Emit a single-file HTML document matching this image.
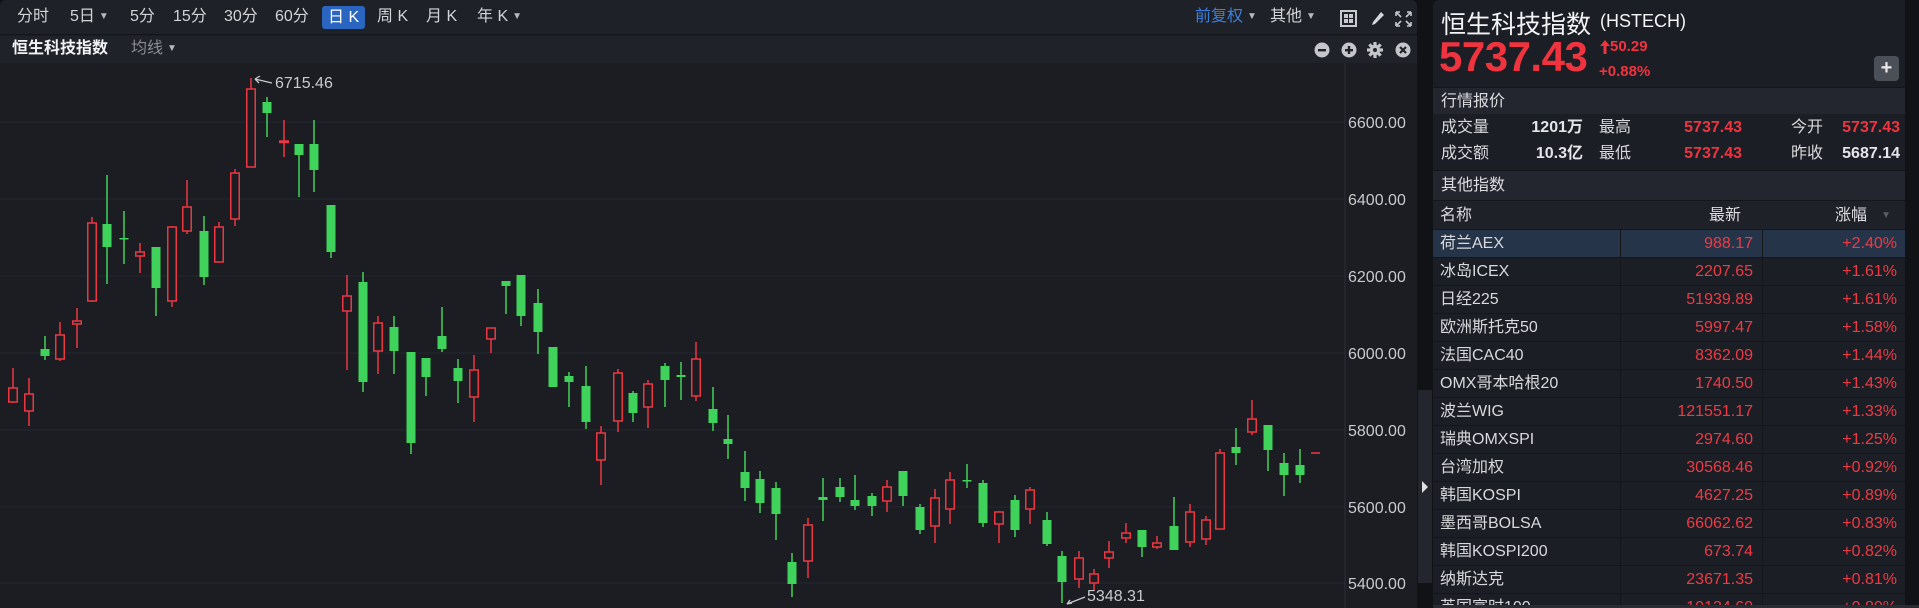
<!DOCTYPE html>
<html><head><meta charset="utf-8">
<style>
*{margin:0;padding:0;box-sizing:border-box}
body{width:1919px;height:608px;background:#111216;overflow:hidden;font-family:"Liberation Sans","Noto Sans CJK SC",sans-serif;color:#d8d9dc;position:relative}
.left{position:absolute;left:0;top:0;width:1417px;height:608px;background:#1b1d23;border-radius:6px 6px 0 0;overflow:hidden}
.tb{position:absolute;left:0;top:0;width:1417px;height:35px;background:#1f2128;border-bottom:1px solid #15161a}
.tb span{position:absolute;top:7px;font-size:16px;color:#d3d4d8;line-height:20px}
.tb .act{background:#2a66c0;color:#fff;border-radius:3px;padding:0 6px;top:6px;height:23px;line-height:23px}
.sb{position:absolute;left:0;top:36px;width:1417px;height:27px;background:#20222a}
.sb span{position:absolute;top:2px;font-size:16px;line-height:22px}
.chev{font-size:10px;color:#b8b9bd;vertical-align:2px;margin-left:4px}
.div{position:absolute;left:1417px;top:0;width:16px;height:608px;background:#111216}
.divt{position:absolute;left:1418px;top:390px;width:14px;height:193px;background:#24262d}
.right{position:absolute;left:1433px;top:0;width:486px;height:608px;background:#1c1e25;border-radius:6px 0 0 0;overflow:hidden}
.abs{position:absolute;white-space:nowrap}
.red{color:#f0343f}
.sec{position:absolute;left:0;width:472px;background:#23262e;font-size:16px;color:#dcdde0;padding-left:8px}
.row{position:absolute;left:0;width:472px;height:28px;border-bottom:1px solid #15161a;font-size:16px;line-height:28px}
.row .n{position:absolute;left:7px;color:#d8d9dc}
.row .v{position:absolute;right:152px;color:#ef3a44}
.row .p{position:absolute;right:8px;color:#ef3a44}
.row .s1{position:absolute;left:187px;top:0;width:1px;height:28px;background:#15161a}
.row .s2{position:absolute;left:329px;top:0;width:1px;height:28px;background:#15161a}
</style></head><body>
<div class="left">
  <div class="tb">
    <span style="left:17px">分时</span>
    <span style="left:70px">5日<i class="chev">▼</i></span>
    <span style="left:130px">5分</span>
    <span style="left:173px">15分</span>
    <span style="left:224px">30分</span>
    <span style="left:275px">60分</span>
    <span class="act" style="left:322px">日 K</span>
    <span style="left:377px">周 K</span>
    <span style="left:426px">月 K</span>
    <span style="left:477px">年 K<i class="chev">▼</i></span>
    <span style="left:1195px;color:#3d7fd9">前复权<i class="chev">▼</i></span>
    <span style="left:1270px">其他<i class="chev">▼</i></span>
    <svg style="position:absolute;left:1340px;top:10px" width="80" height="18" viewBox="0 0 80 18">
      <rect x="1" y="1" width="15" height="15" fill="none" stroke="#c9cacd" stroke-width="2"/>
      <rect x="4" y="4" width="4" height="4" fill="#c9cacd"/><rect x="9" y="4" width="4" height="4" fill="#c9cacd"/>
      <rect x="4" y="9" width="4" height="4" fill="#c9cacd"/><rect x="9" y="9" width="4" height="4" fill="#c9cacd"/>
      <path d="M41 2 L44 5 L35 14 L32 15 L33 12 Z" fill="#d6d7da"/>
      <path d="M56 2h4M56 2v4M71 2h-4M71 2v4M56 16h4M56 16v-4M71 16h-4M71 16v-4M57 3l4 4M70 3l-4 4M57 15l4-4M70 15l-4-4" stroke="#c9cacd" stroke-width="1.6" fill="none"/>
    </svg>
  </div>
  <div class="sb">
    <span style="left:12px;font-weight:bold;color:#f2f2f4">恒生科技指数</span>
    <span style="left:131px;color:#8b8d93">均线<i class="chev">▼</i></span>
    <svg style="position:absolute;left:1314px;top:6px" width="100" height="17" viewBox="0 0 100 17">
      <circle cx="8" cy="8" r="7.5" fill="#c5c6ca"/><rect x="4" y="7" width="8" height="2.4" fill="#20222a"/>
      <circle cx="35" cy="8" r="7.5" fill="#c5c6ca"/><rect x="31" y="7" width="8" height="2.4" fill="#20222a"/><rect x="33.8" y="4" width="2.4" height="8" fill="#20222a"/>
      <g transform="translate(61,8)" fill="#c5c6ca"><circle r="5.2"/><rect x="-1.6" y="-8" width="3.2" height="16"/><rect x="-8" y="-1.6" width="16" height="3.2"/><rect x="-1.6" y="-8" width="3.2" height="16" transform="rotate(45)"/><rect x="-1.6" y="-8" width="3.2" height="16" transform="rotate(-45)"/><circle r="2" fill="#20222a"/></g>
      <circle cx="89" cy="8" r="7.5" fill="#c5c6ca"/><path d="M86 5l6 6M92 5l-6 6" stroke="#20222a" stroke-width="2.2"/>
    </svg>
  </div>
  <svg style="position:absolute;left:0;top:63px" width="1417" height="545" viewBox="0 63 1417 545" font-family="Liberation Sans, sans-serif">
    <g stroke="#262830" stroke-width="1">
      <line x1="0" y1="122" x2="1345" y2="122"/><line x1="0" y1="199" x2="1345" y2="199"/>
      <line x1="0" y1="276" x2="1345" y2="276"/><line x1="0" y1="353" x2="1345" y2="353"/>
      <line x1="0" y1="430" x2="1345" y2="430"/><line x1="0" y1="507" x2="1345" y2="507"/>
      <line x1="0" y1="583" x2="1345" y2="583"/>
    </g>
    <line x1="1345" y1="63" x2="1345" y2="608" stroke="#2e3038"/>
    <g fill="#c9cacd" font-size="16">
      <text x="1348" y="128">6600.00</text><text x="1348" y="205">6400.00</text>
      <text x="1348" y="282">6200.00</text><text x="1348" y="359">6000.00</text>
      <text x="1348" y="436">5800.00</text><text x="1348" y="513">5600.00</text>
      <text x="1348" y="589">5400.00</text>
    </g>
    <g id="c"></g>
    <g fill="#c9cacd" font-size="16">
      <text x="275" y="88">6715.46</text>
      <text x="1087" y="601">5348.31</text>
    </g>
    <path d="M255 79 L272 83 M255 79 l5 -3 M255 79 l4 4" stroke="#c9cacd" stroke-width="1.3" fill="none"/>
    <path d="M1067 604 L1085 597 M1067 604 l5 -1 M1067 604 l3 -4" stroke="#c9cacd" stroke-width="1.3" fill="none"/>
    <line x1="1311" y1="453" x2="1320" y2="453" stroke="#ef3a44" stroke-width="1.5"/>
  </svg>
</div>
<div class="div"></div>
<div class="divt"></div>
<svg style="position:absolute;left:1421px;top:480px" width="8" height="14"><path d="M1 1 L7 7 L1 13 Z" fill="#e0e0e0"/></svg>
<div class="right">
  <div class="abs" style="left:8px;top:5px;font-size:25px;color:#f4f4f6">恒生科技指数</div>
  <div class="abs" style="left:167px;top:11px;font-size:18px;color:#f4f4f6">(HSTECH)</div>
  <div class="abs red" style="left:6px;top:33px;font-size:42px;font-weight:bold;letter-spacing:-0.5px">5737.43</div>
  <svg style="position:absolute;left:167px;top:40px" width="10" height="14"><path d="M5 0 L10 6 H6.5 V14 H3.5 V6 H0 Z" fill="#f0343f"/></svg>
  <div class="abs red" style="left:177px;top:38px;font-size:15px;font-weight:bold">50.29</div>
  <div class="abs red" style="left:166px;top:63px;font-size:15px;font-weight:bold">+0.88%</div>
  <div class="abs" style="left:441px;top:56px;width:25px;height:25px;background:#4b4f58;border-radius:4px;color:#e8e8ea;font-size:20px;line-height:24px;text-align:center;font-weight:bold">+</div>
  <div class="sec" style="top:87px;height:27px;line-height:27px;border-top:1px solid #15161a">行情报价</div>
  <div class="abs" style="left:0;top:114px;width:472px;height:56px;background:#1c1e25;font-size:16px;line-height:26px">
    <span class="abs" style="left:8px;top:1px">成交量</span>
    <span class="abs" style="right:322px;top:1px;font-weight:bold;color:#e4e5e8">1201万</span>
    <span class="abs" style="left:166px;top:1px">最高</span>
    <span class="abs red" style="right:163px;top:1px;font-weight:bold">5737.43</span>
    <span class="abs" style="left:358px;top:1px">今开</span>
    <span class="abs red" style="right:5px;top:1px;font-weight:bold">5737.43</span>
    <span class="abs" style="left:8px;top:27px">成交额</span>
    <span class="abs" style="right:322px;top:27px;font-weight:bold;color:#e4e5e8">10.3亿</span>
    <span class="abs" style="left:166px;top:27px">最低</span>
    <span class="abs red" style="right:163px;top:27px;font-weight:bold">5737.43</span>
    <span class="abs" style="left:358px;top:27px">昨收</span>
    <span class="abs" style="right:5px;top:27px;font-weight:bold;color:#e4e5e8">5687.14</span>
  </div>
  <div class="sec" style="top:170px;height:31px;line-height:30px;border-top:1px solid #15161a;border-bottom:1px solid #15161a">其他指数</div>
  <div class="row" style="top:201px;height:29px;line-height:29px;background:#1f2129">
    <span class="n">名称</span><span class="v" style="color:#dcdde0;right:164px">最新</span><span class="p" style="color:#dcdde0;right:38px">涨幅</span><span class="abs" style="right:14px;color:#5a5c62;font-size:10px">▼</span>
  </div>
  <div class="row" style="top:230px;background:#253449"><span class="n">荷兰AEX</span><span class="v">988.17</span><span class="p">+2.40%</span><i class="s1"></i><i class="s2"></i></div>
  <div class="row" style="top:258px"><span class="n">冰岛ICEX</span><span class="v">2207.65</span><span class="p">+1.61%</span><i class="s1"></i><i class="s2"></i></div>
  <div class="row" style="top:286px"><span class="n">日经225</span><span class="v">51939.89</span><span class="p">+1.61%</span><i class="s1"></i><i class="s2"></i></div>
  <div class="row" style="top:314px"><span class="n">欧洲斯托克50</span><span class="v">5997.47</span><span class="p">+1.58%</span><i class="s1"></i><i class="s2"></i></div>
  <div class="row" style="top:342px"><span class="n">法国CAC40</span><span class="v">8362.09</span><span class="p">+1.44%</span><i class="s1"></i><i class="s2"></i></div>
  <div class="row" style="top:370px"><span class="n">OMX哥本哈根20</span><span class="v">1740.50</span><span class="p">+1.43%</span><i class="s1"></i><i class="s2"></i></div>
  <div class="row" style="top:398px"><span class="n">波兰WIG</span><span class="v">121551.17</span><span class="p">+1.33%</span><i class="s1"></i><i class="s2"></i></div>
  <div class="row" style="top:426px"><span class="n">瑞典OMXSPI</span><span class="v">2974.60</span><span class="p">+1.25%</span><i class="s1"></i><i class="s2"></i></div>
  <div class="row" style="top:454px"><span class="n">台湾加权</span><span class="v">30568.46</span><span class="p">+0.92%</span><i class="s1"></i><i class="s2"></i></div>
  <div class="row" style="top:482px"><span class="n">韩国KOSPI</span><span class="v">4627.25</span><span class="p">+0.89%</span><i class="s1"></i><i class="s2"></i></div>
  <div class="row" style="top:510px"><span class="n">墨西哥BOLSA</span><span class="v">66062.62</span><span class="p">+0.83%</span><i class="s1"></i><i class="s2"></i></div>
  <div class="row" style="top:538px"><span class="n">韩国KOSPI200</span><span class="v">673.74</span><span class="p">+0.82%</span><i class="s1"></i><i class="s2"></i></div>
  <div class="row" style="top:566px"><span class="n">纳斯达克</span><span class="v">23671.35</span><span class="p">+0.81%</span><i class="s1"></i><i class="s2"></i></div>
  <div class="row" style="top:594px"><span class="n">英国富时100</span><span class="v">10134.60</span><span class="p">+0.80%</span><i class="s1"></i><i class="s2"></i></div>
  <div class="abs" style="left:472px;top:0;width:14px;height:608px;background:#111216"></div>
  <div class="abs" style="left:0;top:605px;width:486px;height:3px;background:#2a2c33"></div>
</div>
<script>
var d=[
[13,368,388,402,403,'r'],[29,378,394,411,426,'r'],[45,336,349,356,360,'g'],[60,322,335,359,361,'r'],[77,308,321,324,348,'r'],
[92,217,223,301,302,'r'],[107,175,224,247,284,'g'],[124,211,238,239,264,'g'],[140,243,252,256,273,'r'],[156,247,247,288,316,'g'],
[172,226,227,301,307,'r'],[187,180,207,231,234,'r'],[204,216,231,277,285,'g'],[219,222,227,262,262,'r'],[235,169,173,219,226,'r'],
[251,78,89,167,167,'r'],[267,97,102,113,137,'g'],[284,120,141,142,157,'r'],[299,144,144,155,197,'g'],[314,120,144,170,192,'g'],
[331,205,205,252,258,'g'],[347,275,296,311,370,'r'],[363,272,282,382,392,'g'],[378,316,323,351,374,'r'],[394,316,327,351,374,'g'],
[411,352,352,443,454,'g'],[426,358,358,377,396,'g'],[442,307,336,349,352,'g'],[458,359,368,381,403,'g'],[474,355,370,397,422,'r'],
[491,328,328,339,353,'r'],[506,281,281,286,314,'g'],[521,275,275,316,326,'g'],[538,289,303,332,354,'g'],[553,347,347,387,387,'g'],
[569,372,376,382,407,'g'],[586,366,386,422,429,'g'],[601,426,433,460,485,'r'],[618,369,373,421,432,'r'],[633,391,393,413,422,'g'],
[648,380,384,407,428,'r'],[665,363,366,380,407,'g'],[681,362,375,377,400,'g'],[696,342,359,396,401,'r'],[713,387,409,423,431,'g'],
[728,415,439,444,459,'g'],[745,451,472,488,501,'g'],[760,471,479,503,513,'g'],[776,482,488,514,540,'g'],[792,553,562,584,597,'g'],
[808,518,525,561,578,'r'],[823,478,497,500,521,'g'],[840,478,487,497,502,'g'],[855,475,500,506,510,'g'],[872,493,496,506,516,'g'],
[887,480,487,501,512,'r'],[903,471,471,496,506,'g'],[920,504,507,530,534,'g'],[935,489,498,526,543,'r'],[950,472,480,509,524,'r'],
[967,464,480,481,488,'g'],[983,480,483,523,527,'g'],[999,511,512,524,543,'r'],[1015,495,500,530,537,'g'],[1030,487,490,509,524,'r'],
[1047,512,520,544,546,'g'],[1062,551,556,582,603,'g'],[1079,551,558,579,588,'r'],[1094,569,574,583,591,'r'],[1109,541,552,558,568,'r'],
[1126,523,533,538,543,'r'],[1142,530,530,547,557,'g'],[1157,536,543,547,549,'r'],[1174,497,526,550,550,'g'],[1190,504,512,542,547,'r'],
[1206,516,520,539,545,'r'],[1220,449,453,529,529,'r'],[1236,428,447,453,465,'g'],[1252,400,419,432,435,'r'],[1268,425,425,450,471,'g'],
[1284,453,463,475,496,'g'],[1300,449,465,475,483,'g']];
var s='';
d.forEach(function(c){var x=c[0],col=c[5]=='r'?'#ec3642':'#3fd35b';
s+='<line x1="'+x+'" y1="'+c[1]+'" x2="'+x+'" y2="'+c[4]+'" stroke="'+col+'" stroke-width="1.5"/>';
var h=Math.max(c[3]-c[2],1.5);
if(c[5]=='r'){s+='<rect x="'+(x-4.25)+'" y="'+c[2]+'" width="8.5" height="'+h+'" fill="#1b1d23" stroke="'+col+'" stroke-width="1.5"/>';}
else{s+='<rect x="'+(x-4.5)+'" y="'+c[2]+'" width="9" height="'+h+'" fill="'+col+'"/>';}
});
document.getElementById('c').innerHTML=s;
</script>
</body></html>
